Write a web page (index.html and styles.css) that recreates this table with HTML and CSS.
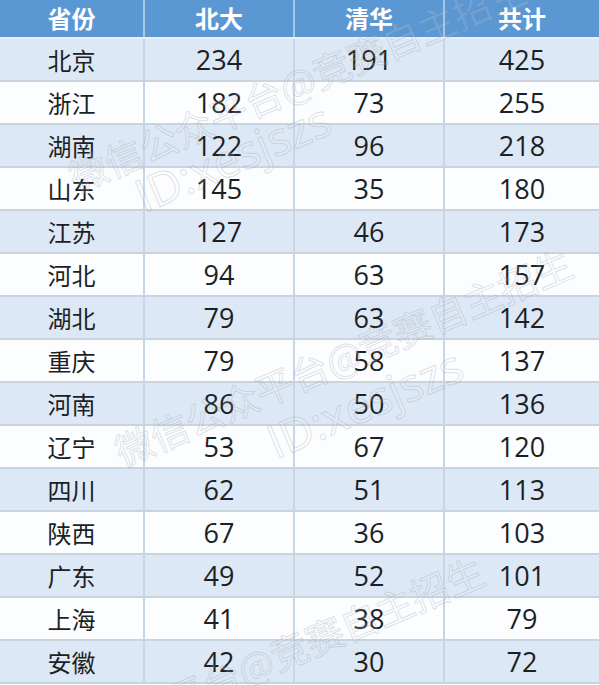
FILE: index.html
```html
<!DOCTYPE html>
<html lang="zh-CN">
<head>
<meta charset="utf-8">
<title>北大清华录取人数</title>
<link rel="stylesheet" href="styles.css">
</head>
<body>
<div class="sheet">
  <div class="row head">
    <div class="cell">省份</div><div class="cell">北大</div><div class="cell">清华</div><div class="cell">共计</div>
  </div>
  <div class="row alt"><div class="cell zh">北京</div><div class="cell">234</div><div class="cell">191</div><div class="cell">425</div></div>
  <div class="row"><div class="cell zh">浙江</div><div class="cell">182</div><div class="cell">73</div><div class="cell">255</div></div>
  <div class="row alt"><div class="cell zh">湖南</div><div class="cell">122</div><div class="cell">96</div><div class="cell">218</div></div>
  <div class="row"><div class="cell zh">山东</div><div class="cell">145</div><div class="cell">35</div><div class="cell">180</div></div>
  <div class="row alt"><div class="cell zh">江苏</div><div class="cell">127</div><div class="cell">46</div><div class="cell">173</div></div>
  <div class="row"><div class="cell zh">河北</div><div class="cell">94</div><div class="cell">63</div><div class="cell">157</div></div>
  <div class="row alt"><div class="cell zh">湖北</div><div class="cell">79</div><div class="cell">63</div><div class="cell">142</div></div>
  <div class="row"><div class="cell zh">重庆</div><div class="cell">79</div><div class="cell">58</div><div class="cell">137</div></div>
  <div class="row alt"><div class="cell zh">河南</div><div class="cell">86</div><div class="cell">50</div><div class="cell">136</div></div>
  <div class="row"><div class="cell zh">辽宁</div><div class="cell">53</div><div class="cell">67</div><div class="cell">120</div></div>
  <div class="row alt"><div class="cell zh">四川</div><div class="cell">62</div><div class="cell">51</div><div class="cell">113</div></div>
  <div class="row"><div class="cell zh">陕西</div><div class="cell">67</div><div class="cell">36</div><div class="cell">103</div></div>
  <div class="row alt"><div class="cell zh">广东</div><div class="cell">49</div><div class="cell">52</div><div class="cell">101</div></div>
  <div class="row"><div class="cell zh">上海</div><div class="cell">41</div><div class="cell">38</div><div class="cell">79</div></div>
  <div class="row alt"><div class="cell zh">安徽</div><div class="cell">42</div><div class="cell">30</div><div class="cell">72</div></div>

  <div class="marks" aria-hidden="true">
    <span class="wm wm1">微信公众平台@竞赛自主招生</span>
    <span class="wm id id1">ID:xesjszs</span>
    <span class="wm wm2">微信公众平台@竞赛自主招生</span>
    <span class="wm id id2">ID:xesjszs</span>
    <span class="wm wm3">微信公众平台@竞赛自主招生</span>
  </div>
</div>
</body>
</html>
```
FILE: styles.css
```css
html, body {
  margin: 0;
  padding: 0;
  background: #ffffff;
}

.sheet {
  position: relative;
  width: 599px;
  height: 685px;
  overflow: hidden;
  font-family: "Open Sans", "Noto Sans CJK SC", sans-serif;
  color: #1c1f24;
}

.row {
  display: grid;
  grid-template-columns: 145px 150px 150px 1fr;
  height: 43px;
  box-sizing: border-box;
  border-bottom: 2px solid #c9d4df;
  background: #fbfdff;
}

.row.alt {
  background: #dce8f5;
}

.cell {
  display: flex;
  align-items: center;
  justify-content: center;
  font-size: 27px;
  border-right: 2px solid #c6d6e7;
  line-height: 1;
}

.cell:last-child {
  border-right: none;
}

.cell.zh {
  font-family: "Noto Sans CJK SC", sans-serif;
  font-size: 24px;
}

.row.head {
  height: 39px;
  background: #5b97d3;
  border-bottom: 2px solid #e8f0f9;
}

.row.head .cell {
  font-family: "Noto Sans CJK SC", sans-serif;
  font-size: 24px;
  font-weight: 700;
  color: #ffffff;
  border-right-color: #a7c6e8;
  padding-bottom: 2px;
}

.marks {
  position: absolute;
  left: 0;
  top: 0;
  width: 599px;
  height: 685px;
  pointer-events: none;
}

.wm {
  position: absolute;
  white-space: nowrap;
  font-family: "Noto Sans CJK SC", sans-serif;
  font-size: 38px;
  line-height: 1;
  color: rgba(255, 255, 255, 0.12);
  -webkit-text-stroke: 1px rgba(130, 140, 150, 0.26);
  transform-origin: 0 100%;
  transform: rotate(-23deg);
}

.wm.id {
  font-family: "Open Sans", sans-serif;
  font-size: 46px;
}

.wm1 { left: 78px; top: 158px; }
.id1 { left: 146px; top: 172px; }
.wm2 { left: 124px; top: 432px; }
.id2 { left: 278px; top: 418px; }
.wm3 { left: 36px; top: 740px; }
```
